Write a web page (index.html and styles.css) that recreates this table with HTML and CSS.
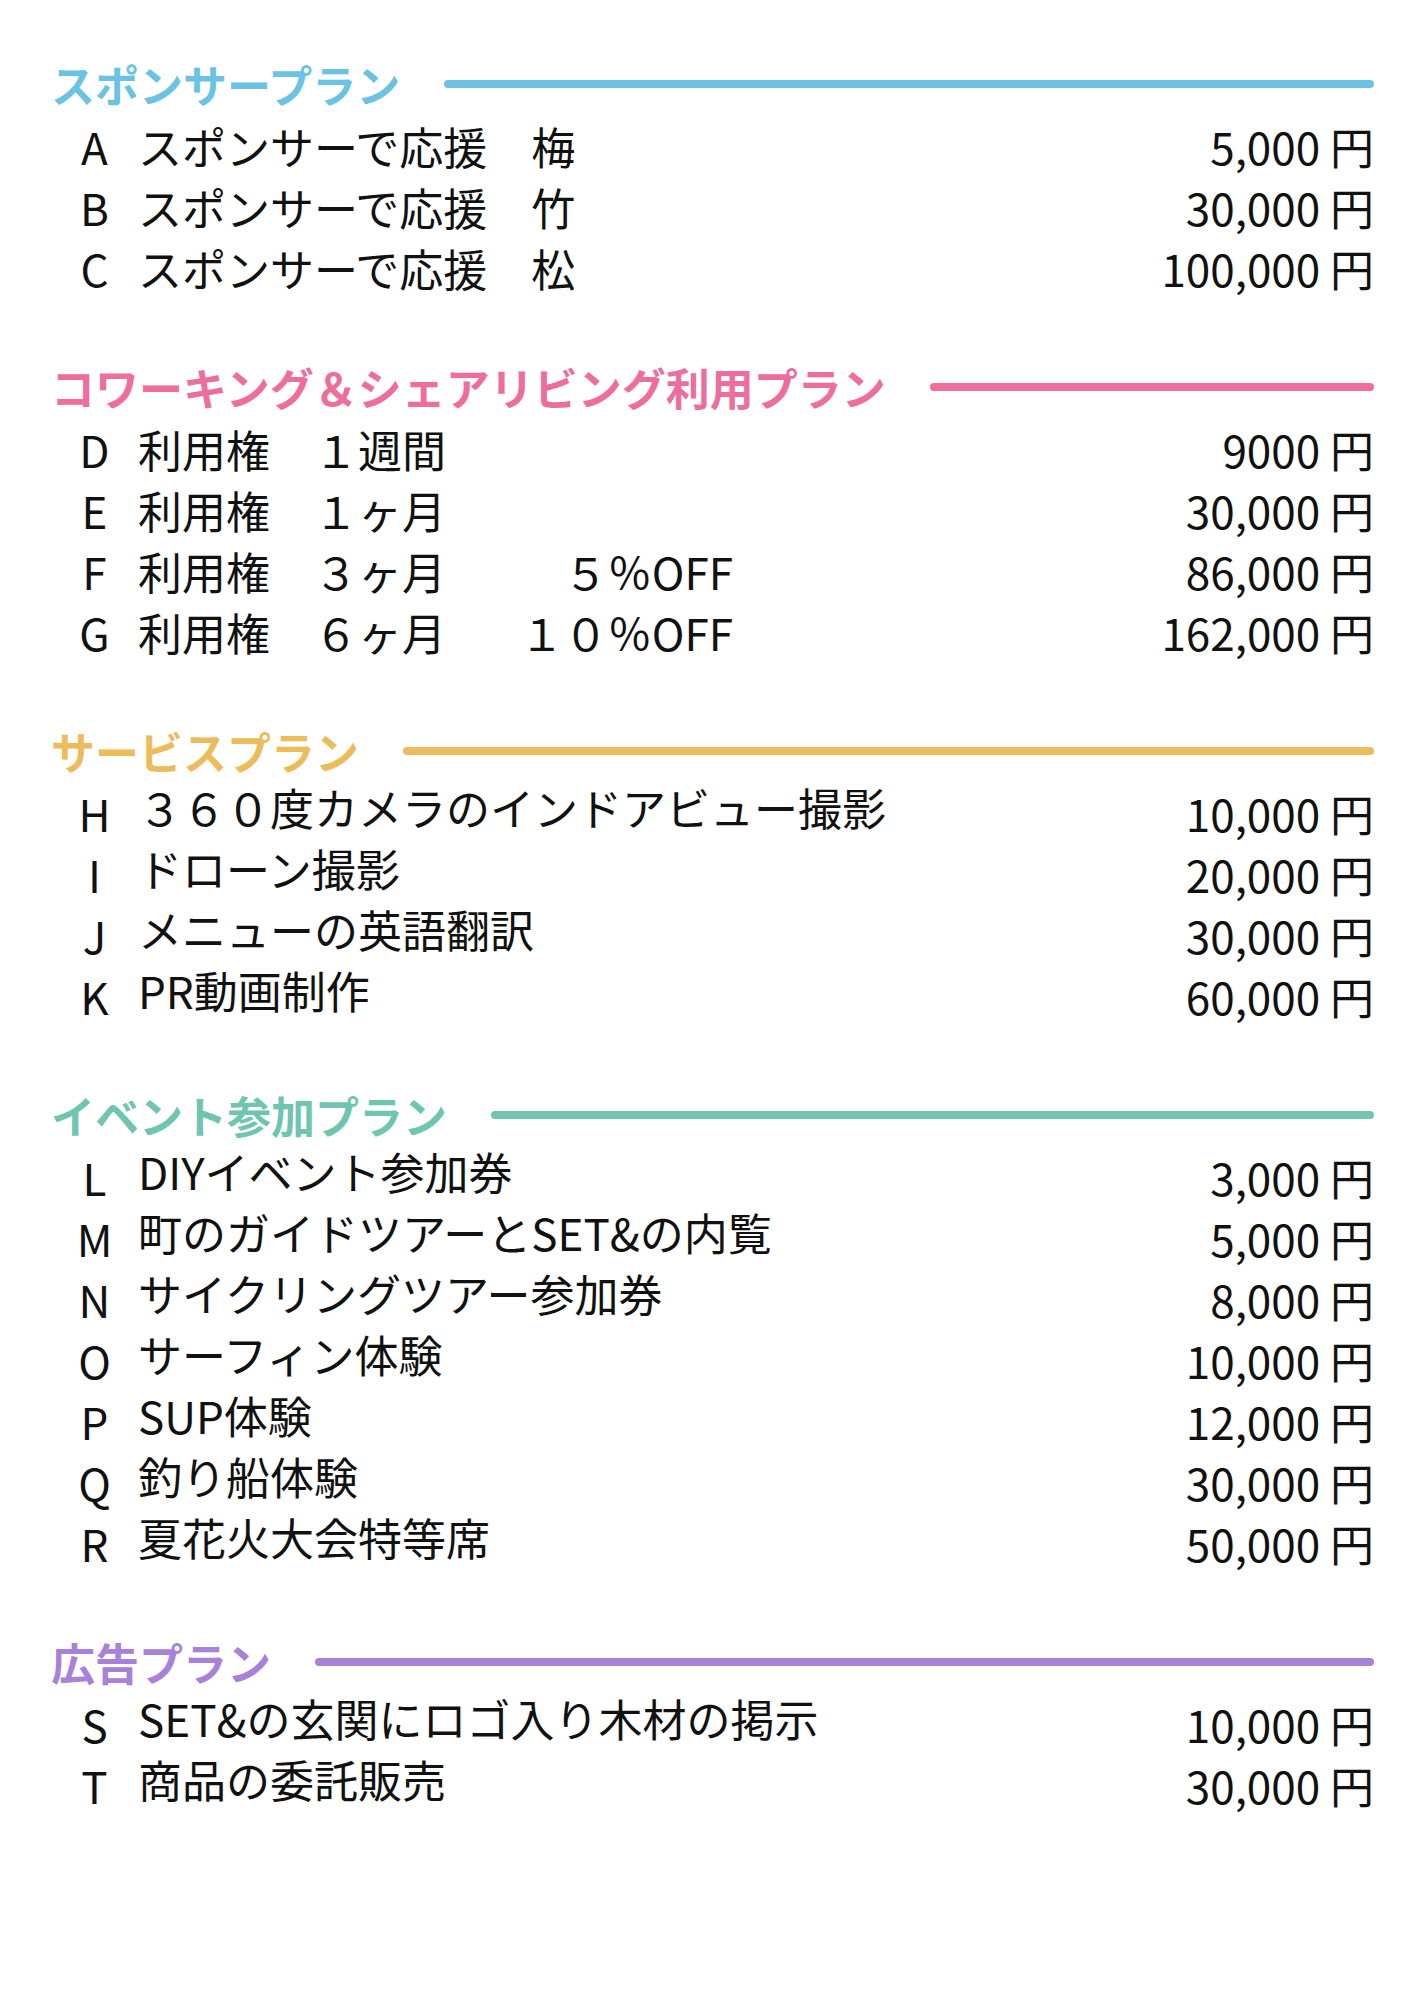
FILE: index.html
```html
<!DOCTYPE html>
<html lang="ja">
<head>
<meta charset="utf-8">
<title>プラン一覧</title>
<link rel="stylesheet" href="styles.css">
</head>
<body>
<main class="page">
  <section class="plan blue">
    <div class="plan-head"><h2 class="plan-title">スポンサープラン</h2><span class="plan-line"></span></div>
    <div class="row"><span class="key">A</span><span class="desc">スポンサーで応援　梅</span><span class="price">5,000 円</span></div>
    <div class="row"><span class="key">B</span><span class="desc">スポンサーで応援　竹</span><span class="price">30,000 円</span></div>
    <div class="row"><span class="key">C</span><span class="desc">スポンサーで応援　松</span><span class="price">100,000 円</span></div>
  </section>

  <section class="plan pink">
    <div class="plan-head"><h2 class="plan-title">コワーキング＆シェアリビング利用プラン</h2><span class="plan-line"></span></div>
    <div class="row"><span class="key">D</span><span class="desc">利用権　１週間</span><span class="price">9000 円</span></div>
    <div class="row"><span class="key">E</span><span class="desc">利用権　１ヶ月</span><span class="price">30,000 円</span></div>
    <div class="row"><span class="key">F</span><span class="desc">利用権　３ヶ月<span class="note">５％OFF</span></span><span class="price">86,000 円</span></div>
    <div class="row"><span class="key">G</span><span class="desc">利用権　６ヶ月<span class="note">１０％OFF</span></span><span class="price">162,000 円</span></div>
  </section>

  <section class="plan yellow raised">
    <div class="plan-head"><h2 class="plan-title">サービスプラン</h2><span class="plan-line"></span></div>
    <div class="row"><span class="key">H</span><span class="desc">３６０度カメラのインドアビュー撮影</span><span class="price">10,000 円</span></div>
    <div class="row"><span class="key">I</span><span class="desc">ドローン撮影</span><span class="price">20,000 円</span></div>
    <div class="row"><span class="key">J</span><span class="desc">メニューの英語翻訳</span><span class="price">30,000 円</span></div>
    <div class="row"><span class="key">K</span><span class="desc">PR動画制作</span><span class="price">60,000 円</span></div>
  </section>

  <section class="plan green raised">
    <div class="plan-head"><h2 class="plan-title">イベント参加プラン</h2><span class="plan-line"></span></div>
    <div class="row"><span class="key">L</span><span class="desc">DIYイベント参加券</span><span class="price">3,000 円</span></div>
    <div class="row"><span class="key">M</span><span class="desc">町のガイドツアーとSET&amp;の内覧</span><span class="price">5,000 円</span></div>
    <div class="row"><span class="key">N</span><span class="desc">サイクリングツアー参加券</span><span class="price">8,000 円</span></div>
    <div class="row"><span class="key">O</span><span class="desc">サーフィン体験</span><span class="price">10,000 円</span></div>
    <div class="row"><span class="key">P</span><span class="desc">SUP体験</span><span class="price">12,000 円</span></div>
    <div class="row"><span class="key">Q</span><span class="desc">釣り船体験</span><span class="price">30,000 円</span></div>
    <div class="row"><span class="key">R</span><span class="desc">夏花火大会特等席</span><span class="price">50,000 円</span></div>
  </section>

  <section class="plan purple raised">
    <div class="plan-head"><h2 class="plan-title">広告プラン</h2><span class="plan-line"></span></div>
    <div class="row"><span class="key">S</span><span class="desc">SET&amp;の玄関にロゴ入り木材の掲示</span><span class="price">10,000 円</span></div>
    <div class="row"><span class="key">T</span><span class="desc">商品の委託販売</span><span class="price">30,000 円</span></div>
  </section>
</main>
</body>
</html>
```

FILE: styles.css
```css
* { box-sizing: border-box; }

html, body {
  margin: 0;
  padding: 0;
  background: #ffffff;
}

body {
  font-family: "Noto Sans CJK JP", "Noto Sans", sans-serif;
  color: #111111;
}

.page {
  width: 1414px;
  min-height: 2000px;
  padding: 52px 40px 0 51px;
}

.plan {
  margin-bottom: 57px;
}

.plan-head {
  display: flex;
  align-items: center;
  gap: 44px;
  height: 63px;
}

.plan-title {
  margin: 0;
  font-size: 44px;
  line-height: 1;
  font-weight: 700;
  letter-spacing: 0;
  white-space: nowrap;
}

.plan-line {
  flex: 1;
  height: 8px;
  border-radius: 4px;
}

.blue .plan-title { color: #6cc2e3; }
.blue .plan-line { background: #6cc2e3; }
.pink .plan-title { color: #ed6e9c; }
.pink .plan-line { background: #ed6e9c; }
.yellow .plan-title { color: #ecbc5b; }
.yellow .plan-line { background: #ecbc5b; }
.green .plan-title { color: #6fc5b0; }
.green .plan-line { background: #6fc5b0; }
.purple .plan-title { color: #a881d8; }
.purple .plan-line { background: #a881d8; }

.row {
  display: grid;
  grid-template-columns: 87px 1fr auto;
  align-items: center;
  height: 61px;
  font-size: 44px;
  line-height: 46px;
}

.key {
  text-align: center;
}

.desc {
  white-space: nowrap;
}

.raised .desc {
  padding-bottom: 12px;
}

.note {
  display: inline-block;
  width: 287px;
  text-align: right;
}

.price {
  text-align: right;
  white-space: nowrap;
}
```
